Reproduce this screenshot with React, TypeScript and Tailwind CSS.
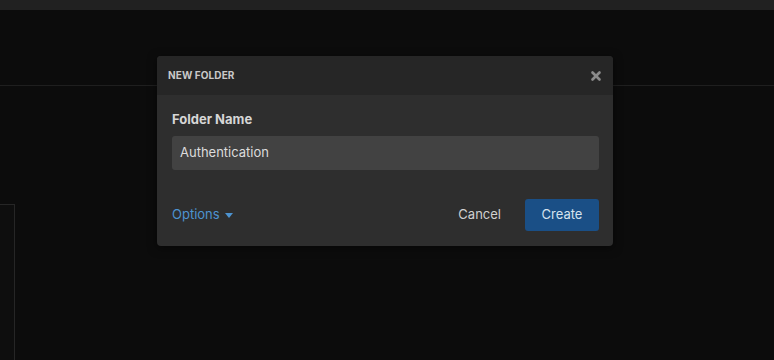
import { X } from 'lucide-react';

const App = () => {
  return (
    <div className="relative w-[774px] h-[360px] overflow-hidden bg-[#0c0c0c] font-['Inter',sans-serif]">
      <div className="h-[10px] bg-[#212121]" />
      <div className="h-[76px] border-b border-[#1f1f1f]" />
      <div className="flex pt-[118px]">
        <div className="w-[15px] h-[160px] border-t border-r border-[#262626] bg-[#0e0e0e]" />
      </div>

      <div className="absolute left-[157px] top-[56px] w-[456px] rounded-[4px] overflow-hidden bg-[#2e2e2e] shadow-[0_2px_10px_rgba(0,0,0,0.5)]">
        <div className="h-[39px] flex items-center justify-between pl-[11px] pr-[10px] bg-[#262626]">
          <span className="text-[10px] font-bold text-[#c9c9c9] tracking-[0.1px]">NEW FOLDER</span>
          <X size={14} strokeWidth={4.5} className="text-[#8a8a8a]" />
        </div>
        <div className="pl-[15px] pr-[14px] pt-[16px] pb-[15px]">
          <label className="block text-[13px] font-bold text-[#d6d6d6] leading-[16px]">Folder Name</label>
          <div className="mt-[9px] h-[34px] rounded-[3px] bg-[#424242] flex items-center px-[8px]">
            <span className="text-[13px] text-[#dcdcdc]">Authentication</span>
          </div>
          <div className="mt-[29px] flex items-center justify-between">
            <button className="flex items-center gap-[5px] text-[13px] text-[#4d93d0]">
              Options
              <svg width="8" height="5" viewBox="0 0 8 5"><path d="M0 0h8L4 5z" fill="#4d93d0" /></svg>
            </button>
            <div className="flex items-center gap-[24px]">
              <button className="text-[13px] text-[#d0d0d0]">Cancel</button>
              <button className="w-[74px] h-[32px] rounded-[3px] bg-[#1a4f86] text-[13px] text-[#d6e2ee]">Create</button>
            </div>
          </div>
        </div>
      </div>
    </div>
  );
};

export default App;
